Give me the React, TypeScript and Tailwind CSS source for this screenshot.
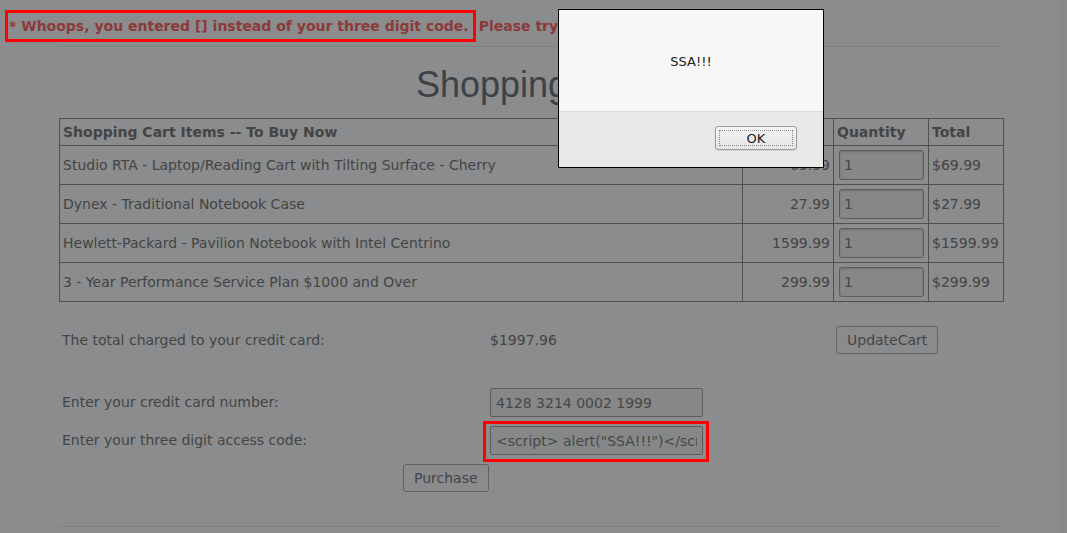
import React from "react";

const items = [
  { name: "Studio RTA - Laptop/Reading Cart with Tilting Surface - Cherry", price: "69.99", total: "$69.99" },
  { name: "Dynex - Traditional Notebook Case", price: "27.99", total: "$27.99" },
  { name: "Hewlett-Packard - Pavilion Notebook with Intel Centrino", price: "1599.99", total: "$1599.99" },
  { name: "3 - Year Performance Service Plan $1000 and Over", price: "299.99", total: "$299.99" },
];

const font = "font-['DejaVu_Sans',sans-serif]";

function AlertDialog() {
  return (
    <div className="absolute left-[558px] top-[9px] w-[266px] h-[159px] border border-black bg-[#e9e9e9] flex flex-col font-['DejaVu_Sans',sans-serif]">
      <div className="h-[102px] bg-[#f7f7f7] border-b border-[#dadada] flex items-center justify-center pt-[3px] text-[13px] text-[#222]">
        SSA!!!
      </div>
      <div className="flex-1 flex justify-end items-start pt-[14px] pr-[26px]">
        <button className="w-[82px] h-[24px] rounded-[3px] border border-[#9b9b9b] bg-gradient-to-b from-[#f6f6f6] to-[#e4e4e4] p-[3px] shadow-[0_1px_1px_rgba(0,0,0,0.1)]">
          <span className="flex h-full items-center justify-center border border-dotted border-[#8a8a8a] text-[13px] leading-none text-[#1a1a1a]">
            OK
          </span>
        </button>
      </div>
    </div>
  );
}

function QtyInput() {
  return (
    <input
      readOnly
      value="1"
      className={`w-[85px] h-[30px] rounded-[3px] border border-[#5c5c5c] bg-[#868788] px-[4px] text-[14px] text-[#474747] shadow-[inset_0_1px_2px_rgba(0,0,0,0.15)] outline-none ${font}`}
    />
  );
}

export default function App() {
  return (
    <div className={`relative w-[1067px] h-[533px] overflow-hidden bg-[#8b8c8d] text-[#444] ${font}`}>
      <div className="absolute right-0 top-0 h-full w-[7px] bg-[#88898a]" />

      <p className="pl-[5px] pt-[10px] text-[14px] font-bold text-[#8b3a3a] whitespace-nowrap leading-[26px]">
        <span className="inline-block border-[3px] border-[#ff0000] pl-[1px] pr-[4px]">
          * Whoops, you entered [] instead of your three digit code.
        </span>
        <span className="ml-[3px]">Please try again.</span>
      </p>

      <div className="ml-[59px] w-[944px]">
        <hr className="mt-[4px] border-t border-[#7f8081]" />

        <h1 className="mt-[17px] h-[54px] text-center font-['Liberation_Sans',Arial,sans-serif] text-[36px] leading-[41px] text-[#3e4247]">
          Shopping Cart
        </h1>

        <table className="w-[944px] border-collapse text-[14px] table-fixed">
          <colgroup>
            <col className="w-[683px]" />
            <col className="w-[91px]" />
            <col className="w-[95px]" />
            <col className="w-[75px]" />
          </colgroup>
          <thead>
            <tr className="h-[27px] text-left font-bold">
              <th className="border border-[#505050] px-[3px]">Shopping Cart Items -- To Buy Now</th>
              <th className="border border-[#505050] px-[3px]">Price</th>
              <th className="border border-[#505050] px-[3px]">Quantity</th>
              <th className="border border-[#505050] px-[3px]">Total</th>
            </tr>
          </thead>
          <tbody>
            {items.map((item) => (
              <tr key={item.name} className="h-[39px]">
                <td className="border border-[#505050] px-[3px]">{item.name}</td>
                <td className="border border-[#505050] px-[3px] text-right">{item.price}</td>
                <td className="border border-[#505050] pl-[5px] pr-[4px]">
                  <QtyInput />
                </td>
                <td className="border border-[#505050] px-[3px] whitespace-nowrap">{item.total}</td>
              </tr>
            ))}
          </tbody>
        </table>

        <div className="mt-[24px] grid grid-cols-[431px_346px_auto] items-center text-[14px]">
          <div className="pl-[3px]">The total charged to your credit card:</div>
          <div>$1997.96</div>
          <div>
            <button className={`h-[28px] rounded-[3px] border border-[#626262] bg-[#8a8b8c] px-[10px] text-[14px] text-[#454545] ${font}`}>
              UpdateCart
            </button>
          </div>
        </div>

        <div className="mt-[34px] grid grid-cols-[431px_auto] gap-y-[9px] items-center text-[14px]">
          <div className="pl-[3px]">Enter your credit card number:</div>
          <div>
            <input
              readOnly
              value="4128 3214 0002 1999"
              className={`w-[213px] h-[29px] rounded-[2px] border border-[#5c5c5c] bg-[#868788] px-[5px] text-[14px] text-[#474747] outline-none ${font}`}
            />
          </div>
          <div className="pl-[3px]">Enter your three digit access code:</div>
          <div className="relative">
            <span className="absolute left-[-7px] top-[-5px] w-[226px] h-[41px] border-[3px] border-[#ff0000]" />
            <input
              readOnly
              value={'<script> alert("SSA!!!")</script>'}
              className={`relative w-[213px] h-[29px] rounded-[2px] border border-[#5c5c5c] bg-[#868788] px-[5px] text-[14px] text-[#474747] outline-none ${font}`}
            />
          </div>
        </div>

        <div className="mt-[9px] pl-[344px]">
          <button className={`h-[28px] rounded-[3px] border border-[#626262] bg-[#8a8b8c] px-[10px] text-[14px] text-[#454545] ${font}`}>
            Purchase
          </button>
        </div>

        <hr className="mt-[34px] border-t border-[#7f8081]" />
      </div>

      <AlertDialog />
    </div>
  );
}
